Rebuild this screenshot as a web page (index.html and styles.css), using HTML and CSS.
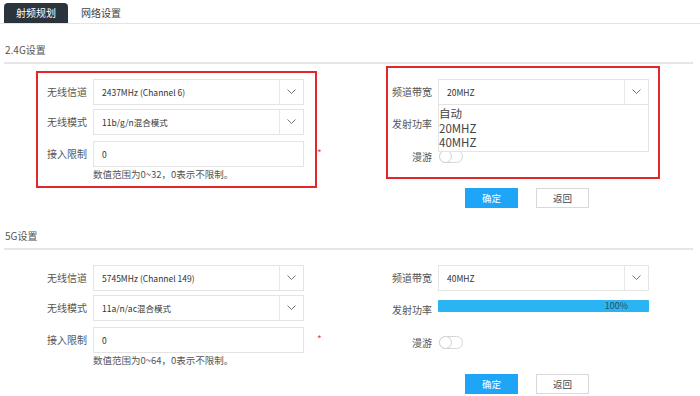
FILE: index.html
```html
<!DOCTYPE html>
<html lang="zh-CN">
<head>
<meta charset="utf-8">
<title>射频规划</title>
<link rel="stylesheet" href="styles.css">
</head>
<body>
<div class="page">
  <div class="tabs">
    <div class="tab active">射频规划</div>
    <div class="tab">网络设置</div>
  </div>

  <div class="section">
    <div class="section-title">2.4G设置</div>
    <div class="divider"></div>
    <div class="content">
      <div class="col left">
        <div class="row">
          <div class="label">无线信道</div>
          <div class="select"><span class="val">2437MHz (Channel 6)</span><span class="arrow"><svg width="9" height="5" viewBox="0 0 9 5"><polyline points="0.5,0.5 4.5,4.5 8.5,0.5" fill="none" stroke="#777" stroke-width="1"/></svg></span></div>
        </div>
        <div class="row r2">
          <div class="label">无线模式</div>
          <div class="select"><span class="val">11b/g/n混合模式</span><span class="arrow"><svg width="9" height="5" viewBox="0 0 9 5"><polyline points="0.5,0.5 4.5,4.5 8.5,0.5" fill="none" stroke="#777" stroke-width="1"/></svg></span></div>
        </div>
        <div class="row r3">
          <div class="label">接入限制</div>
          <div class="input">0</div>
          <span class="req">*</span>
        </div>
        <div class="hint">数值范围为0~32，0表示不限制。</div>
      </div>
      <div class="col right">
        <div class="row">
          <div class="label">频道带宽</div>
          <div class="select open"><span class="val">20MHZ</span><span class="arrow"><svg width="9" height="5" viewBox="0 0 9 5"><polyline points="0.5,0.5 4.5,4.5 8.5,0.5" fill="none" stroke="#777" stroke-width="1"/></svg></span>
            <div class="dropdown">
              <div class="opt">自动</div>
              <div class="opt">20MHZ</div>
              <div class="opt">40MHZ</div>
            </div>
          </div>
        </div>
        <div class="row power">
          <div class="label">发射功率</div>
          <div class="bar"><span>100%</span></div>
        </div>
        <div class="row roam">
          <div class="label">漫游</div>
          <div class="toggle"><span class="knob"></span></div>
        </div>
        <div class="buttons">
          <div class="btn primary">确定</div>
          <div class="btn">返回</div>
        </div>
      </div>
    </div>
    <div class="mark mark-left"></div>
    <div class="mark mark-right"></div>
  </div>

  <div class="section s5">
    <div class="section-title">5G设置</div>
    <div class="divider"></div>
    <div class="content">
      <div class="col left">
        <div class="row">
          <div class="label">无线信道</div>
          <div class="select"><span class="val">5745MHz (Channel 149)</span><span class="arrow"><svg width="9" height="5" viewBox="0 0 9 5"><polyline points="0.5,0.5 4.5,4.5 8.5,0.5" fill="none" stroke="#777" stroke-width="1"/></svg></span></div>
        </div>
        <div class="row r2">
          <div class="label">无线模式</div>
          <div class="select"><span class="val">11a/n/ac混合模式</span><span class="arrow"><svg width="9" height="5" viewBox="0 0 9 5"><polyline points="0.5,0.5 4.5,4.5 8.5,0.5" fill="none" stroke="#777" stroke-width="1"/></svg></span></div>
        </div>
        <div class="row r3">
          <div class="label">接入限制</div>
          <div class="input">0</div>
          <span class="req">*</span>
        </div>
        <div class="hint">数值范围为0~64，0表示不限制。</div>
      </div>
      <div class="col right">
        <div class="row">
          <div class="label">频道带宽</div>
          <div class="select"><span class="val">40MHZ</span><span class="arrow"><svg width="9" height="5" viewBox="0 0 9 5"><polyline points="0.5,0.5 4.5,4.5 8.5,0.5" fill="none" stroke="#777" stroke-width="1"/></svg></span></div>
        </div>
        <div class="row power">
          <div class="label">发射功率</div>
          <div class="bar"><span>100%</span></div>
        </div>
        <div class="row roam">
          <div class="label">漫游</div>
          <div class="toggle"><span class="knob"></span></div>
        </div>
        <div class="buttons">
          <div class="btn primary">确定</div>
          <div class="btn">返回</div>
        </div>
      </div>
    </div>
  </div>
</div>
</body>
</html>
```
FILE: styles.css
```css
html, body {
  margin: 0;
  padding: 0;
  background: #fff;
}
body {
  font-family: "Noto Sans CJK SC", "Liberation Sans", sans-serif;
  font-size: 10px;
  color: #333;
  width: 700px;
  height: 396px;
  overflow: hidden;
}
.page {
  width: 700px;
}
.tabs {
  display: flex;
  align-items: flex-end;
  height: 23px;
  border-bottom: 1px solid #e4e4e4;
  padding-left: 4px;
}
.tab {
  height: 20px;
  line-height: 20px;
  padding: 0 13px;
  font-size: 10px;
  color: #444;
}
.tab.active {
  width: 64px;
  box-sizing: border-box;
  padding: 0;
  text-align: center;
  background: #2b333d;
  color: #fff;
  border-radius: 4px 4px 0 0;
}
.section {
  position: relative;
  display: flow-root;
}
.section-title {
  margin-top: 20px;
  padding-left: 5px;
  line-height: 12px;
  font-size: 10px;
  color: #555;
}
.s5 .section-title {
  margin-top: 22px;
}
.divider {
  margin: 6px 7px 0 4px;
  height: 2px;
  background: #e6e6e6;
}
.content {
  display: flex;
  margin-top: 15px;
}
.col.left {
  width: 345px;
}
.col.right {
  width: 355px;
}
.row {
  display: flex;
  align-items: center;
}
.label {
  width: 93px;
  box-sizing: border-box;
  padding-right: 6px;
  text-align: right;
  color: #555;
  line-height: 12px;
  flex: none;
}
.select, .input {
  position: relative;
  width: 211px;
  height: 26px;
  box-sizing: border-box;
  border: 1px solid #e4e4e4;
  background: #fff;
  display: flex;
  align-items: center;
  flex: none;
  color: #333;
  font-size: 8.5px;
}
.select .val, .input {
  padding-left: 8px;
}
.select .val {
  flex: 1;
}
.select .arrow {
  width: 23px;
  height: 100%;
  border-left: 1px solid #e8e8e8;
  display: flex;
  align-items: center;
  justify-content: center;
}
.select .arrow svg {
  display: block;
  margin-top: -2px;
}
.r2 {
  margin-top: 4px;
}
.r3 {
  margin-top: 6px;
}
.req {
  margin-left: 13px;
  color: #e24a4a;
  font-size: 10px;
  margin-top: -3px;
}
.hint {
  margin-left: 93px;
  line-height: 12px;
  margin-top: 1px;
  color: #555;
  font-size: 9.5px;
}
.dropdown {
  position: absolute;
  left: -1px;
  top: 25px;
  width: 211px;
  height: 47px;
  box-sizing: border-box;
  border: 1px solid #e4e4e4;
  border-top: none;
  background: #fff;
  padding-top: 1px;
  z-index: 2;
}
.opt {
  font-size: 11.5px;
  line-height: 14.5px;
  color: #444;
  padding-left: 0;
}
.row.power {
  margin-top: 9px;
  align-items: flex-start;
}
.row.power .label {
  padding-top: 4px;
}
.bar {
  width: 211px;
  height: 12px;
  background: #2ab4f4;
  border-radius: 1px;
  text-align: right;
  box-sizing: border-box;
  padding-right: 21px;
  font-size: 9px;
  line-height: 12px;
  color: #3a4a55;
  flex: none;
}
.row.roam {
  margin-top: 20px;
}
.toggle {
  margin-left: 1px;
  width: 24px;
  height: 13px;
  box-sizing: border-box;
  border: 1px solid #d6d6d6;
  border-radius: 7px;
  position: relative;
  background: #fff;
}
.knob {
  position: absolute;
  left: -1px;
  top: -1px;
  width: 13px;
  height: 13px;
  box-sizing: border-box;
  border: 1px solid #d0d0d0;
  border-radius: 50%;
  background: #fff;
}
.buttons {
  display: flex;
  margin-top: 25px;
  padding-left: 120px;
  gap: 18px;
}
.btn {
  width: 53px;
  height: 20px;
  box-sizing: border-box;
  line-height: 18px;
  text-align: center;
  border: 1px solid #d9d9d9;
  background: #fff;
  color: #444;
  font-size: 9.5px;
}
.btn.primary {
  background: #1ea5f8;
  border-color: #1ea5f8;
  color: #fff;
}
.mark {
  position: absolute;
  border: 2px solid #e3262a;
  box-sizing: border-box;
  z-index: 5;
}
.mark-left {
  left: 36px;
  top: 47px;
  width: 281px;
  height: 117px;
}
.mark-right {
  left: 386px;
  top: 42px;
  width: 274px;
  height: 113px;
}
```
